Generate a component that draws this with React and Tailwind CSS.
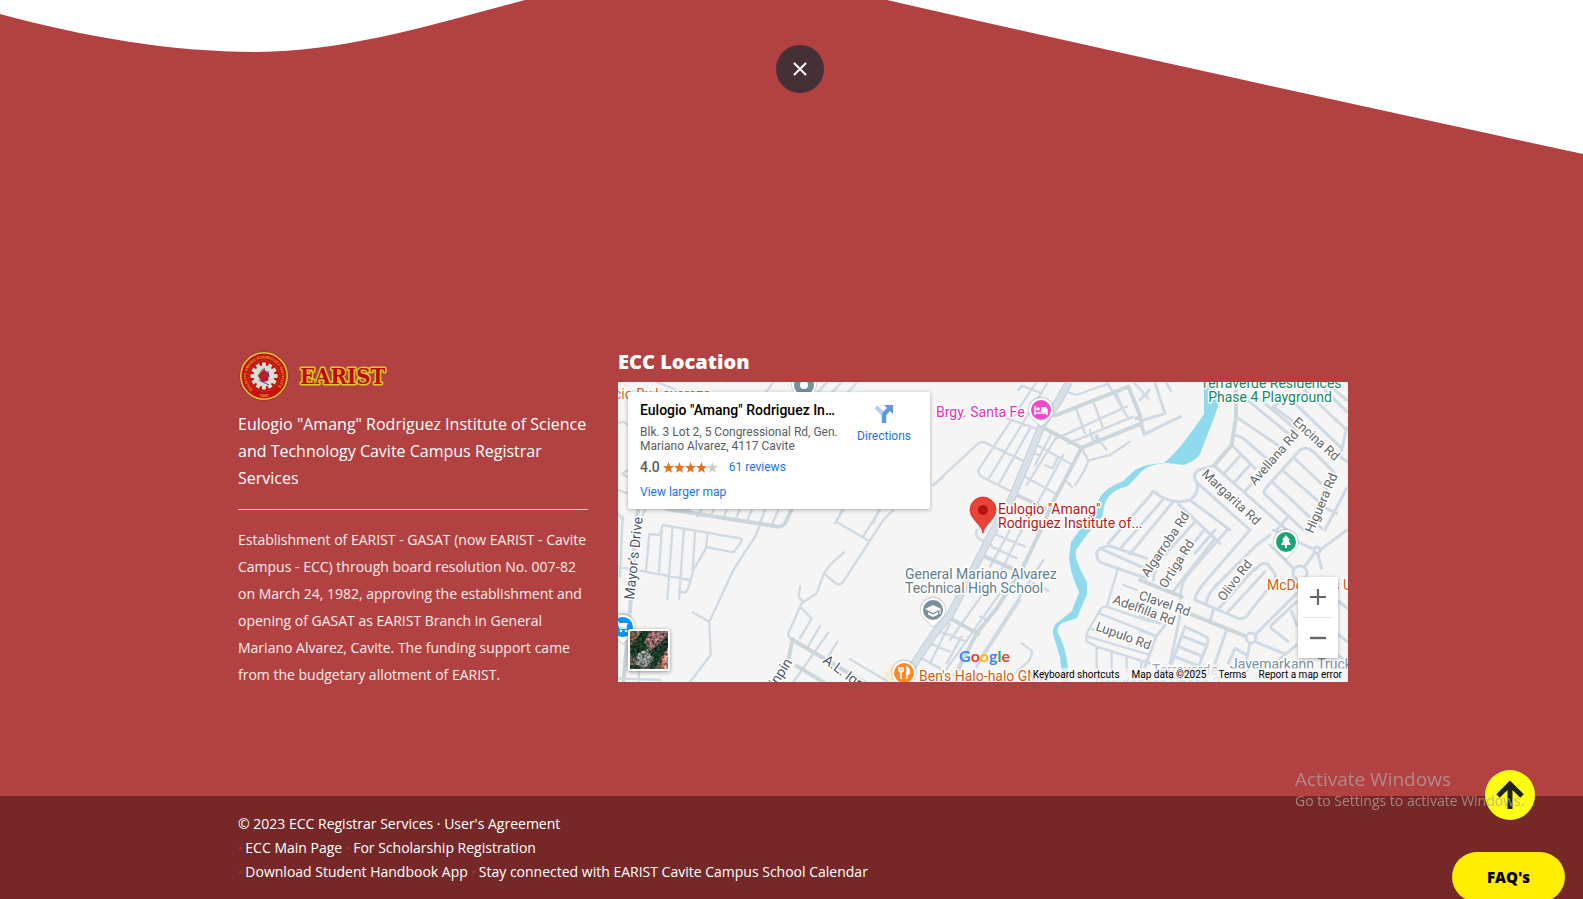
import React from "react";

const thinRoads = [
  {
    at: "translate(-8 -42) scale(0.33333)",
    d: "M24 250 L40 245 L54 255 M54 390 L36 401 L54 412 M24 520 L40 540 M140 126 L200 150 M490 126 L465 160 M652 126 L620 160 M695 126 L665 160 M742 126 L712 160 M54 490 L240 512 M110 500 L90 545 M240 500 L235 520 M280 500 L262 530 M700 505 L675 550 M810 500 L790 550 M970 435 L1000 412 M24 450 L60 462",
  },
  {
    at: "translate(-8 128) scale(0.33333)",
    d: "M275 0 L265 12 M312 0 L300 18 M350 0 L338 26 M388 0 L376 32 M425 0 L410 36 M465 0 L448 45 M505 0 L485 45 M450 45 L435 80 L370 180 L298 335 L302 435 L240 516 M248 307 L298 335 M150 75 L158 45 L390 85 Q400 90 392 98 L370 127 L295 112 M150 75 L118 72 L108 180 M155 60 L147 185 M188 50 L172 268 M222 55 L207 268 M255 65 L248 185 M292 75 L288 115 L250 180 L235 235 L225 248 L207 245 M24 170 L240 210 M24 15 L38 20 L30 200 M700 0 L678 35 L778 93 M810 0 L760 78 M850 0 L820 30 L700 215 Q690 228 680 222 L642 190 M702 127 L660 165 L642 190 L620 250 L575 280 L535 370 Q532 380 548 388 M570 230 L566 262 L580 275 M572 292 L605 325 L570 385 M630 348 L595 408 M655 368 L550 516 M682 395 L655 440 M720 448 L830 512 M24 310 L60 312 M24 505 L150 510 M85 460 L88 516 M935 445 L990 475 M975 365 L990 370",
  },
  {
    at: "translate(312 -7) scale(0.33333)",
    d: "M265 45 L275 32 L335 55 M320 20 L145 285 Q142 298 160 308 L265 360 M352 24 L178 308 M300 160 L205 330 M10 330 L145 205 Q153 198 165 203 L285 260 M230 130 L330 165 M325 213 L420 265 M380 185 L290 330 M362 180 L315 270 M400 240 L322 385 M345 270 L368 280 L382 250 M285 305 L375 355 M312 235 L328 240 M455 220 L475 257 Q465 290 435 330 M475 257 L540 240 L600 200 M500 185 L530 225 M380 190 L590 95 M415 205 L610 125 M440 105 L465 175 M480 165 L492 205 M490 80 L520 160 M530 20 L595 130 M558 52 L580 105 M410 320 L425 335 M410 50 L440 60 L480 45 L530 28 M610 20 L655 70 M635 145 L645 178 L660 172",
  },
  {
    at: "translate(312 148) scale(0.33333)",
    d: "M140 0 Q135 20 150 28 L185 45 M190 10 L285 50 M240 0 L180 110 M275 0 L215 120 M185 50 L260 85 M340 90 L160 370 M310 160 L355 182 M270 210 L140 410 M210 190 L40 430 M160 190 L60 330 M150 260 L175 272 M20 300 L110 335 M0 340 L60 365 M60 280 L0 400 M95 320 L50 400 M0 400 L30 415 M275 340 L305 362 Q308 375 295 395 L260 425 M565 112 L530 230 M580 165 L620 180 M530 230 Q515 228 510 242 L475 300 Q465 325 470 335 L500 350 L660 400 M530 230 L660 275 M508 250 L660 310 M480 295 L520 310 M475 320 L660 375 M500 350 L500 430 M545 365 L545 430 M590 380 L590 430 M635 395 L632 430",
  },
  {
    at: "translate(522 -7) scale(0.33333)",
    d: "M0 75 L28 45 M45 25 L75 115 L5 137 M12 178 L122 125 M78 20 L92 47 M0 145 L12 178 M222 272 L310 350 L440 465 M222 272 L175 285 Q155 300 170 322 L330 465 M250 298 L298 245 M283 322 L330 270 M312 352 L360 300 M275 210 L345 280 M285 180 L310 190 L400 268 M288 125 L430 222 M310 65 L450 180 M345 60 L470 165 M400 95 L460 140 M400 95 Q420 85 440 60 M440 62 L600 215 M490 42 L620 165 M540 30 L620 110 M580 42 L620 75 M620 160 L600 245 L622 260 M372 355 Q370 345 390 325 L480 225 Q500 212 520 230 L580 290 L575 305 M372 355 L490 465 M398 322 L545 460 M432 290 L560 400 L590 415 M465 252 L560 340 M620 340 L555 465 M35 352 Q45 347 55 360 Q100 390 150 375 Q175 360 172 325 M150 375 L270 465 M440 430 L410 465",
  },
  {
    at: "translate(382 98) scale(0.33333)",
    d: "M458 38 L325 190 M490 57 L362 205 M518 67 L390 222 M535 72 L660 190 M292 235 L290 218 Q298 200 330 198 L440 235 M300 205 L435 265 M292 235 Q296 248 320 254 L440 295 M585 125 L480 240 Q465 265 460 300 M612 150 L545 235 Q500 285 490 325 M645 175 L570 270 Q530 320 520 335",
  },
  {
    at: "translate(522 148) scale(0.33333)",
    d: "M120 205 L125 170 Q130 150 160 115 L248 15 M165 210 Q165 190 200 150 L330 0 M200 220 Q200 195 230 165 L350 45 L390 15 M165 210 L295 265 Q315 270 330 245 L405 150 Q412 140 400 125 L385 105 Q375 95 360 105 L345 120 M375 125 L260 250 M345 115 L232 240 M220 240 L210 275 M262 0 L235 30 M225 0 L165 70 M125 235 L90 400 M0 260 L60 280 M0 300 L48 318 M0 340 L38 355 M95 260 L48 320 L15 410 M135 290 L195 318 Q208 325 203 340 L170 425 M125 318 L195 345 M115 350 L185 378 M105 380 L175 408 M135 290 L95 400 M260 300 L225 400 M330 340 L320 385 M345 335 L435 372 M320 375 L285 355 L265 400 M345 315 L470 190 M400 300 Q385 290 400 280 L470 215 M400 300 L445 335 M455 245 L470 285 M470 345 L410 395 M530 60 L490 115 M530 60 L545 115 M538 62 L620 0 M400 0 L515 55 M390 45 L460 115 M590 210 L622 235 M590 310 L622 335 M590 375 L622 395",
  },
];

const midRoads = [
  { at: "translate(-8 128) scale(0.33333)", d: "M90 -20 L80 20 L60 300 L40 516 M170 -3 L505 50 Q520 50 528 35 L548 -10 M545 388 L860 575 M548 388 L536 445 M560 468 L640 516" },
  { at: "translate(312 -7) scale(0.33333)", d: "M335 155 L455 218 L635 145 M620 130 L632 125 L595 35 L375 122 M635 145 L628 120 M455 218 L370 380 L325 480 M250 355 L345 400 M500 185 L506 200" },
  { at: "translate(312 148) scale(0.33333)", d: "M325 15 L280 110 L200 235 L140 310 L75 435 M165 80 L245 115 M55 262 L145 312" },
  { at: "translate(522 -7) scale(0.33333)", d: "M288 20 L288 125 L275 210 L222 272" },
  { at: "translate(522 148) scale(0.33333)", d: "M0 150 L125 200 M140 248 L320 320" },
];

const mainRoad = "M451 0 L440 20 L424 43 L411 75 L393 118 L372 155 L332 233 L316 252 L292 288 L284 304";

function Label({ x, y, fill, size = 14, rotate = 0, anchor = "start", children }) {
  return (
    <text
      transform={`translate(${x} ${y}) rotate(${rotate})`}
      fill={fill}
      fontSize={size}
      textAnchor={anchor}
      stroke="#ffffff"
      strokeWidth="3"
      strokeLinejoin="round"
      paintOrder="stroke"
    >
      {children}
    </text>
  );
}

function Poi({ x, y, fill, children }) {
  return (
    <g transform={`translate(${x} ${y})`}>
      <path d="M0 18 L-9 9 A13 13 0 1 1 9 9 Z" fill="#8a949b" opacity=".35" />
      <path d="M0 16.500 L-8.500 8.500 A12 12 0 1 1 8.500 8.500 Z" fill="#fff" />
      <circle r="10" fill={fill} />
      {children}
    </g>
  );
}

function MapDrawing() {
  return (
    <svg
      viewBox="0 0 730 300"
      preserveAspectRatio="xMidYMid slice"
      className="block h-full w-full bg-[#f5f5f5] font-[Roboto,sans-serif]"
      role="img"
      aria-label="Street map around the campus"
    >
      <path
        d="M586 0 L597 0 L600 24 L596 36 L582 72 Q579 78 566 83 L548 81 Q530 82 522 91 L510 104 Q492 108 487 121 L484 135 Q470 150 458 168 Q456 178 469 200 L469 212 L459 236 L444 241 Q437 246 441 253 Q450 270 451 300 L445 300 L442 275 L435 252 Q434 244 440 240 L454 229 L461 210 Q452 190 451 176 L453 160 L464 145 L476 130 L482 115 Q490 104 504 100 L517 88 Q526 82 546 81 Q562 68 586 32 Z"
        fill="#90daee"
      />
      <path d="M272 282 L284 288 L280 300 L263 300 Z" fill="#f9edd3" />
      <g fill="none" stroke="#cfdae4" strokeLinecap="round" strokeLinejoin="round">
        {thinRoads.map((r, i) => (
          <path key={i} transform={r.at} d={r.d} strokeWidth={i > 3 ? 9 : 7} />
        ))}
      </g>
      <g fill="none" stroke="#cbd7dd" strokeWidth="12" strokeLinecap="round" strokeLinejoin="round">
        {midRoads.map((r, i) => (
          <path key={i} transform={r.at} d={r.d} />
        ))}
      </g>
      <g fill="none" strokeLinejoin="round">
        <path d={mainRoad} stroke="#c3d0d8" strokeWidth="8" />
        <path d={mainRoad} stroke="#d7e0e7" strokeWidth="6" />
      </g>
      <g fill="#f5f5f5" stroke="#cfdae4" strokeWidth="3">
        <circle cx="633" cy="256" r="5" />
        <circle cx="682" cy="191" r="7" />
        <circle cx="699" cy="168" r="3" />
      </g>

      <Label x={-4} y={17} fill="#d2691e">cio By Laverezo</Label>
      <Label x={653} y={6} fill="#188560" anchor="middle">Terraverde Residences</Label>
      <Label x={652} y={20} fill="#188560" anchor="middle">Phase 4 Playground</Label>
      <Label x={318} y={35} fill="#e332bd">Brgy. Santa Fe</Label>
      <Label x={287} y={197} fill="#607d8b">General Mariano Alvarez</Label>
      <Label x={287} y={211} fill="#607d8b">Technical High School</Label>
      <Label x={301} y={299} fill="#d2600f">Ben's Halo-halo GMA</Label>
      <Label x={649} y={208} fill="#d2600f">McDonald's U</Label>
      <Label x={612} y={287} fill="#78909c">Jayemarkann Truck</Label>
      <Label x={534} y={293} fill="#9aa9b2">Terraverde</Label>
      <Label x={477} y={306} fill="#9aa9b2">Residences Phase 2</Label>

      <Label x={674} y={41} size={13} rotate={42} fill="#5f666b">Encina Rd</Label>
      <Label x={637} y={104} size={13} rotate={-49} fill="#5f666b">Avellana Rd</Label>
      <Label x={583} y={93} size={13} rotate={43} fill="#5f666b">Margarita Rd</Label>
      <Label x={695} y={152} size={13} rotate={-67} fill="#5f666b">Higuera Rd</Label>
      <Label x={530} y={196} size={13} rotate={-56} fill="#5f666b">Algarroba Rd</Label>
      <Label x={548} y={207} size={13} rotate={-58} fill="#5f666b">Ortiga Rd</Label>
      <Label x={606} y={220} size={13} rotate={-53} fill="#5f666b">Olivo Rd</Label>
      <Label x={520} y={217} size={13} rotate={19} fill="#5f666b">Clavel Rd</Label>
      <Label x={494} y={221} size={13} rotate={20} fill="#5f666b">Adelfilla Rd</Label>
      <Label x={477} y={248} size={13} rotate={20} fill="#5f666b">Lupulo Rd</Label>
      <Label x={16} y={218} size={14} rotate={-84} fill="#48586b">Mayor's Drive</Label>
      <Label x={204} y={280} size={14} rotate={36} fill="#48586b">A.L. Ignacio</Label>
      <Label x={154} y={312} size={14} rotate={-57} fill="#48586b">ninpin</Label>

      <Poi x={186} y={3} fill="#78909c">
        <circle r="4" fill="#fff" />
      </Poi>
      <Poi x={423} y={28} fill="#f548cb">
        <path d="M-6 -4 V5 M-6 3 H6 M6 5 V-1" stroke="#fff" strokeWidth="1.500" fill="none" />
        <path d="M0 -3 H4 Q6 -3 6 0 V2 H0 Z" fill="#fff" />
        <circle cx="-3" cy="-1" r="1.800" fill="#fff" />
      </Poi>
      <Poi x={315} y={228} fill="#78909c">
        <path d="M0 -5 L8 -1 L0 3 L-8 -1 Z M-5 2 L0 4.500 L5 2 V4.500 L0 7 L-5 4.500 Z" fill="#fff" />
        <path d="M7 -1 V4" stroke="#fff" strokeWidth="1.200" />
      </Poi>
      <Poi x={286} y={291} fill="#ff8826">
        <path d="M-3 -6 V6 M-5 -6 V-2 Q-3 0 -1 -2 V-6" stroke="#fff" strokeWidth="1.400" fill="none" />
        <path d="M3 6 V-6 Q6 -4 5 1 H3" stroke="#fff" strokeWidth="1.500" fill="#fff" />
      </Poi>
      <Poi x={5} y={245} fill="#0b93ff">
        <path d="M-7 -5 H-5 L-3 1 H4" stroke="#fff" strokeWidth="1.400" fill="none" />
        <path d="M-4 -4 H5 L3.500 0 H-2.500 Z" fill="#fff" />
        <circle cx="-2" cy="4" r="1.300" fill="#fff" />
        <circle cx="3" cy="4" r="1.300" fill="#fff" />
      </Poi>
      <Poi x={668} y={160} fill="#17a673">
        <path d="M0 -7 L4 -2 H2.500 L5 3 H1 V6 H-1 V3 H-5 L-2.500 -2 H-4 Z" fill="#fff" />
      </Poi>

      <path d="M365 152 q-5 -4 -4 -9 l4 4 l4 -4 q1 5 -4 9" fill="#fff" stroke="#c9d3da" />
      <path
        d="M365 151 C364 143 352 137 352 128 A13 13 0 1 1 378 128 C378 137 366 143 365 151 Z"
        fill="#ea4335"
        stroke="#c5221f"
        strokeWidth=".7"
      />
      <circle cx="365" cy="128" r="5" fill="#b31412" />
      <Label x={380} y={132} fill="#b3191b">Eulogio "Amang"</Label>
      <Label x={380} y={146} fill="#b3191b">Rodriguez Institute of...</Label>
    </svg>
  );
}

function Satellite() {
  return (
    <svg viewBox="0 0 38 38" className="block h-full w-full" aria-hidden="true">
      <defs>
        <filter id="ground" x="0" y="0" width="100%" height="100%" colorInterpolationFilters="sRGB">
          <feTurbulence type="fractalNoise" baseFrequency="0.4" numOctaves="3" seed="4" result="n" />
          <feColorMatrix in="n" type="matrix" values="1.500 0 0 0 -.35  1.500 0 0 0 -.35  1.500 0 0 0 -.37  0 0 0 0 1" result="grey" />
          <feComposite in="SourceGraphic" in2="grey" operator="arithmetic" k1="1.300" k2=".45" k3="0" k4="0" />
        </filter>
      </defs>
      <g filter="url(#ground)">
        <rect width="38" height="38" fill="#5c5b50" />
        <path d="M0 0 H14 L8 14 L0 20 Z" fill="#75604f" />
        <path d="M14 4 L26 0 H38 L30 14 L22 20 Z" fill="#976a72" />
        <path d="M12 0 H20 L14 12 L20 20 L30 12 L38 6 V16 L30 28 L24 38 H19 L24 26 L12 20 L2 28 L0 16 Z" fill="#1d3a28" />
        <path d="M8 22 L18 18 L22 28 L16 36 L6 34 Z" fill="#87918e" />
        <path d="M38 18 V38 H32 L32 26 Z" fill="#d18376" />
        <path d="M0 34 H8 L12 38 H0 Z" fill="#263a28" />
      </g>
    </svg>
  );
}

function Star({ fill }) {
  return (
    <svg viewBox="0 0 24 24" className="size-[11px]" aria-hidden="true">
      <path fill={fill} d="M12 0 L15.200 8.600 L24 9 L17 14.500 L19.500 23.500 L12 18.300 L4.500 23.500 L7 14.500 L0 9 L8.800 8.600 Z" />
    </svg>
  );
}

function PlaceCard() {
  return (
    <div className="absolute top-[10px] left-[10px] flex h-[117px] w-[302px] justify-between rounded-xs bg-white pt-[10px] pr-[19px] pl-3 font-[Roboto,sans-serif] text-xs shadow-[0_1px_4px_rgba(0,0,0,0.3)]">
      <div>
        <h3 className="text-sm leading-4 font-medium text-black">Eulogio "Amang" Rodriguez In…</h3>
        <p className="mt-[7px] w-[204px] leading-[14px] text-[#5b5b5b]">
          Blk. 3 Lot 2, 5 Congressional Rd, Gen. Mariano Alvarez, 4117 Cavite
        </p>
        <div className="mt-[6px] flex items-center leading-4">
          <span className="text-sm leading-4 font-medium text-[#5b5b5b]">4.0</span>
          <span className="ml-[3px] flex" aria-label="Rated 4 of 5">
            <Star fill="#e7711b" />
            <Star fill="#e7711b" />
            <Star fill="#e7711b" />
            <Star fill="#e7711b" />
            <Star fill="#cccccc" />
          </span>
          <a href="#reviews" className="ml-[11px] text-[#1a73e8]">61 reviews</a>
        </div>
        <a href="#larger-map" className="mt-[9px] block leading-4 text-[#1a73e8]">View larger map</a>
      </div>
      <a href="#directions" className="flex flex-col items-center pt-[2px] text-[#1a73e8]">
        <svg viewBox="0 0 20 20" className="size-5" aria-hidden="true">
          <path d="M2 3 L9 10" stroke="#b5cff6" strokeWidth="4" />
          <path d="M10 19 V12 Q10 10 11.500 8.500 L15 5" fill="none" stroke="#5e97e8" strokeWidth="4.500" />
          <path d="M10 1 H19 V10 Z" fill="#5e97e8" />
        </svg>
        <span className="mt-1 leading-4">Directions</span>
      </a>
    </div>
  );
}

function CampusMap() {
  return (
    <div className="relative h-[300px] overflow-hidden">
      <MapDrawing />
      <PlaceCard />
      <button type="button" aria-label="Show satellite imagery" className="absolute bottom-[11px] left-[10px] size-[42px] rounded-xs border-2 border-white shadow-[0_1px_4px_rgba(0,0,0,0.4)]">
        <Satellite />
      </button>
      <div className="absolute right-[10px] bottom-6 flex w-10 flex-col items-center bg-white shadow-[0_1px_4px_rgba(0,0,0,0.3)]">
        <button type="button" aria-label="Zoom in" className="flex h-10 w-10 items-center justify-center">
          <svg viewBox="0 0 18 18" className="size-[18px]"><path d="M1 9 H17 M9 1 V17" stroke="#666" strokeWidth="2.200" /></svg>
        </button>
        <div className="h-px w-[30px] bg-[#e6e6e6]" />
        <button type="button" aria-label="Zoom out" className="flex h-10 w-10 items-center justify-center">
          <svg viewBox="0 0 18 18" className="size-[18px]"><path d="M1 9 H17" stroke="#666" strokeWidth="2.400" /></svg>
        </button>
      </div>
      <div className="absolute bottom-4 left-[341px] flex font-[Lato,sans-serif] text-[16px] leading-5 font-bold" aria-label="Google">
        <span className="text-[#4285f4]">G</span>
        <span className="text-[#ea4335]">o</span>
        <span className="text-[#fbbc04]">o</span>
        <span className="text-[#4285f4]">g</span>
        <span className="text-[#34a853]">l</span>
        <span className="text-[#ea4335]">e</span>
      </div>
      <div className="absolute right-0 bottom-0 flex gap-3 bg-[#f5f5f5]/70 pr-[6px] pl-[3px] font-[Roboto,sans-serif] text-[10px] leading-[14px] text-black">
        <button type="button">Keyboard shortcuts</button>
        <span>Map data ©2025</span>
        <a href="#terms">Terms</a>
        <a href="#report">Report a map error</a>
      </div>
    </div>
  );
}

function Logo() {
  const teeth = Array.from({ length: 12 }, (_, i) => i * 30);
  return (
    <svg viewBox="0 0 152 52" className="block h-[52px] w-[152px]" role="img" aria-label="EARIST">
      <defs>
        <path id="ring" d="M26 43.500 A17.500 17.500 0 1 1 26.100 43.500" />
      </defs>
      <circle cx="26" cy="26" r="24.500" fill="#7d2f22" />
      <circle cx="26" cy="26" r="23.200" fill="#c8100c" stroke="#ddc43a" strokeWidth="1.600" />
      <circle cx="26" cy="26" r="15.500" fill="#c8100c" stroke="#a8550f" strokeWidth=".6" />
      <text fill="#d9a520" fontSize="4" fontFamily="Liberation Sans, sans-serif" fontWeight="700">
        <textPath href="#ring" startOffset="12">EULOGIO AMANG RODRIGUEZ INSTITUTE</textPath>
      </text>
      <text x="26" y="47" textAnchor="middle" fill="#d9a520" fontSize="4" fontFamily="Liberation Sans, sans-serif" fontWeight="700">1945</text>
      <g fill="#dcdcd4">
        {teeth.map((a) => (
          <rect key={a} x="24" y="12.500" width="4" height="5" transform={`rotate(${a} 26 26)`} />
        ))}
        <circle cx="26" cy="26" r="10.500" />
      </g>
      <path d="M26 19 L31 24 L30 31 L24 32 L20 26 Z" fill="#c2182b" />
      <path d="M20 26 L24 20 L27 18" stroke="#27843d" fill="none" />
      <path d="M21 30 L31 35 M30 21 L31 27" stroke="#3340a0" fill="none" />
      <text
        x="62"
        y="34"
        fontSize="22"
        fontWeight="700"
        fontFamily="DejaVu Serif Condensed, DejaVu Serif, serif"
        fill="#c00a0a"
        stroke="#dcc52c"
        strokeWidth="3"
        strokeLinejoin="round"
        paintOrder="stroke"
      >
        EARIST
      </text>
    </svg>
  );
}

export default function App() {
  return (
    <div className="relative flex min-h-screen flex-col overflow-hidden bg-[#b24141] font-['Open_Sans',sans-serif] text-white">
      <header>
        <svg viewBox="0 0 1583 160" preserveAspectRatio="none" className="block h-40 w-full" aria-hidden="true">
          <path d="M0 0 V14 C86 37 170 52 258 52 C340 52 430 26 525 0 Z" fill="#fff" />
          <path d="M887 0 Q1130 56 1583 154 V0 Z" fill="#fff" />
        </svg>
      </header>
      <button
        type="button"
        aria-label="Close"
        className="absolute top-[45px] left-1/2 ml-[-16px] flex size-12 items-center justify-center rounded-full bg-[#453135]"
      >
        <svg viewBox="0 0 14 14" className="size-[14px]"><path d="M1 1 L13 13 M13 1 L1 13" stroke="#fff" strokeWidth="2" /></svg>
      </button>

      <main className="mx-auto grid w-full max-w-[1113px] grow grid-cols-[350fr_730fr] gap-[30px] pt-[190px] pl-[3px]">
        <section>
          <Logo />
          <p className="mt-[9px] text-base leading-[27px]">
            Eulogio "Amang" Rodriguez Institute of Science and Technology Cavite Campus Registrar Services
          </p>
          <hr className="mt-[17px] border-white/80" />
          <p className="mt-4 text-sm leading-[27px] text-white/90">
            Establishment of EARIST - GASAT (now EARIST - Cavite Campus - ECC) through board resolution No. 007-82 on
            March 24, 1982, approving the establishment and opening of GASAT as EARIST Branch in General Mariano
            Alvarez, Cavite. The funding support came from the budgetary allotment of EARIST.
          </p>
        </section>
        <section>
          <h2 className="mb-2 text-xl leading-6 font-extrabold">ECC Location</h2>
          <CampusMap />
        </section>
      </main>

      <footer className="bg-[#762828] pt-4 pb-[15px] text-sm leading-6">
        <div className="mx-auto w-full max-w-[1113px] pl-[3px]">
          <p>
            © 2023 ECC Registrar Services · <a href="#agreement">User's Agreement</a>
          </p>
          <p>
            <span className="text-[#dc3545]">·</span> <a href="#main">ECC Main Page</a>{" "}
            <span className="text-[#dc3545]">·</span> <a href="#scholarship">For Scholarship Registration</a>
          </p>
          <p>
            <span className="text-[#dc3545]">·</span> <a href="#handbook">Download Student Handbook App</a>{" "}
            <span className="text-[#dc3545]">·</span>{" "}
            <a href="#calendar">Stay connected with EARIST Cavite Campus School Calendar</a>
          </p>
        </div>
      </footer>

      <button
        type="button"
        aria-label="Back to top"
        className="fixed right-12 bottom-[79px] flex size-[50px] items-center justify-center rounded-full bg-[#ffff14]"
      >
        <svg viewBox="0 0 28 30" className="h-[30px] w-7">
          <path d="M14 29 V4 M2 16 L14 4 L26 16" fill="none" stroke="#212121" strokeWidth="5" />
        </svg>
      </button>
      <button
        type="button"
        className="fixed right-[18px] bottom-[-3px] h-[50px] w-[113px] rounded-full bg-[#ffee00] text-[15px] font-extrabold text-black"
      >
        FAQ's
      </button>
      <div className="pointer-events-none fixed right-[50px] bottom-[88px] w-[238px] whitespace-nowrap text-[#b4a0a0]/75">
        <p className="text-[19px] leading-6">Activate Windows</p>
        <p className="text-sm leading-5">Go to Settings to activate Windows.</p>
      </div>
    </div>
  );
}
